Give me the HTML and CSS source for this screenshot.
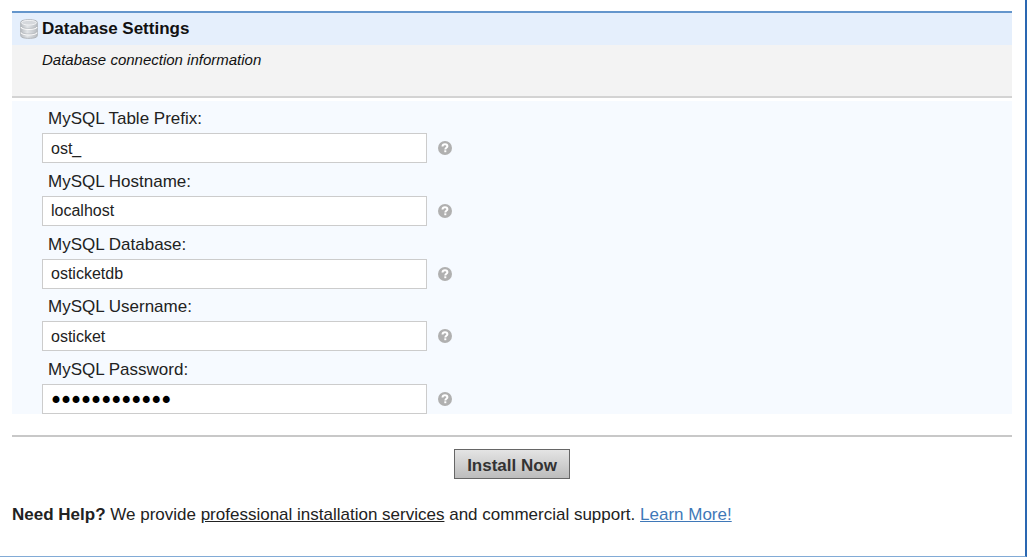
FILE: index.html
```html
<!DOCTYPE html>
<html lang="en">
<head>
<meta charset="utf-8">
<title>Database Settings</title>
<link rel="stylesheet" href="styles.css">
</head>
<body>
<svg class="defs" aria-hidden="true">
  <symbol id="help" viewBox="0 0 14 14">
    <circle cx="7" cy="7" r="7" fill="#b0b0b0"/>
    <path d="M4.500 5.5C4.600 3.9 5.7 3.2 7 3.2c1.4 0 2.4.8 2.4 2 0 1.6-2.1 1.6-2.1 3.2" fill="none" stroke="#fff" stroke-width="2"/>
    <rect x="6.3" y="9.3" width="2" height="1.9" fill="#fff"/>
  </symbol>
</svg>
<main class="page">
  <form class="form">
    <header class="head">
      <h1 class="title">
        <svg class="db" viewBox="0 0 18 20" aria-hidden="true">
          <defs>
            <linearGradient id="metal">
              <stop offset="0" stop-color="#b9bdc2"/>
              <stop offset=".4" stop-color="#e2e5e8"/>
              <stop offset="1" stop-color="#b9bdc2"/>
            </linearGradient>
          </defs>
          <path d="M.7 3.5C.7 1.600 4 .7 9 .7s8.300.9 8.300 2.800v13c0 2-3.300 2.800-8.300 2.800S.7 18.500.7 16.500z" fill="url(#metal)" stroke="#b1b5ba"/>
          <ellipse cx="9" cy="3.700" rx="7.500" ry="2.300" fill="#d5d8dc" stroke="#f1f2f4"/>
          <path d="M1 8c1 2 4 2.400 8 2.400s7-.4 8-2.400M1 13.500c1 2 4 2.400 8 2.400s7-.4 8-2.400" fill="none" stroke="#fafafa" stroke-width="1.300"/>
          <path d="M1 7c1 2 4 2.400 8 2.400s7-.4 8-2.400M1 12.500c1 2 4 2.400 8 2.400s7-.4 8-2.400" fill="none" stroke="#b0b4b9" stroke-width=".6"/>
        </svg>
        Database Settings
      </h1>
      <p class="sub">Database connection information</p>
    </header>
    <section class="fields">
      <div class="field">
        <label class="label" for="prefix">MySQL Table Prefix:</label>
        <div class="row"><input class="input" id="prefix" type="text" value="ost_"><svg class="help" role="img" aria-label="Help"><use href="#help"/></svg></div>
      </div>
      <div class="field">
        <label class="label" for="host">MySQL Hostname:</label>
        <div class="row"><input class="input" id="host" type="text" value="localhost"><svg class="help" role="img" aria-label="Help"><use href="#help"/></svg></div>
      </div>
      <div class="field">
        <label class="label" for="database">MySQL Database:</label>
        <div class="row"><input class="input" id="database" type="text" value="osticketdb"><svg class="help" role="img" aria-label="Help"><use href="#help"/></svg></div>
      </div>
      <div class="field">
        <label class="label" for="user">MySQL Username:</label>
        <div class="row"><input class="input" id="user" type="text" value="osticket"><svg class="help" role="img" aria-label="Help"><use href="#help"/></svg></div>
      </div>
      <div class="field">
        <label class="label" for="password">MySQL Password:</label>
        <div class="row"><input class="input" id="password" type="password" value="abcdefghijkl"><svg class="help" role="img" aria-label="Help"><use href="#help"/></svg></div>
      </div>
    </section>
    <div class="actions"><button class="install" type="button">Install Now</button></div>
  </form>
  <p class="support"><b>Need Help?</b> We provide <a class="services" href="#services">professional installation services</a> and commercial support. <a class="more" href="#more">Learn More!</a></p>
</main>
</body>
</html>
```
FILE: styles.css
```css
* { box-sizing: border-box; }
body {
  margin: 0;
  background: #fff;
  color: #222;
  font: 17px/20px "Liberation Sans", Arial, sans-serif;
}
.defs { display: none; }
.page {
  min-height: 100vh;
  padding: 11px 13px 0 12px;
  border-right: 2px solid #2a67b1;
  border-bottom: 1px solid #82abd6;
}
.head {
  background: #f3f3f3;
  border-top: 2px solid #6496cc;
  border-bottom: 2px solid #d3d3d3;
  padding-bottom: 26px;
}
.title {
  display: flex;
  align-items: center;
  gap: 4px;
  height: 32px;
  margin: 0;
  padding-left: 8px;
  background: #e5effc;
  color: #111;
  font-size: 17px;
}
.db { width: 18px; height: 20px; }
.sub {
  margin: 0;
  padding: 5px 0 0 30px;
  font-size: 15px;
  font-style: italic;
  color: #111;
}
.fields {
  display: flex;
  flex-direction: column;
  justify-content: space-between;
  min-height: 313px;
  margin-top: 3px;
  padding-left: 30px;
  background: #f6faff;
}
.label {
  display: block;
  padding: 8px 6px 4px;
}
.row {
  display: flex;
  align-items: center;
  gap: 11px;
}
.input {
  width: 385px;
  height: 30px;
  padding: 1px 8px 0;
  border: 1px solid #ccc;
  background: #fff;
  color: #222;
  font: 16px/20px "Liberation Sans", Arial, sans-serif;
}
.input[type="password"] {
  color: #000;
  font: 17px/20px "DejaVu Sans", sans-serif;
  -webkit-text-stroke: 2px #000;
}
.help { width: 14px; height: 14px; }
.actions {
  display: flex;
  justify-content: center;
  margin-top: 21px;
  padding-top: 12px;
  border-top: 2px solid #c8c8c8;
}
.install {
  height: 30px;
  padding: 3px 12px 0;
  border: 1px solid #666;
  background: linear-gradient(#e4e4e4, #bcbcbc);
  color: #333;
  font: bold 17px/20px "Liberation Sans", Arial, sans-serif;
}
.support { margin: 26px 0 0; }
.services { color: #222; }
.more { color: #3f78b8; }
```
